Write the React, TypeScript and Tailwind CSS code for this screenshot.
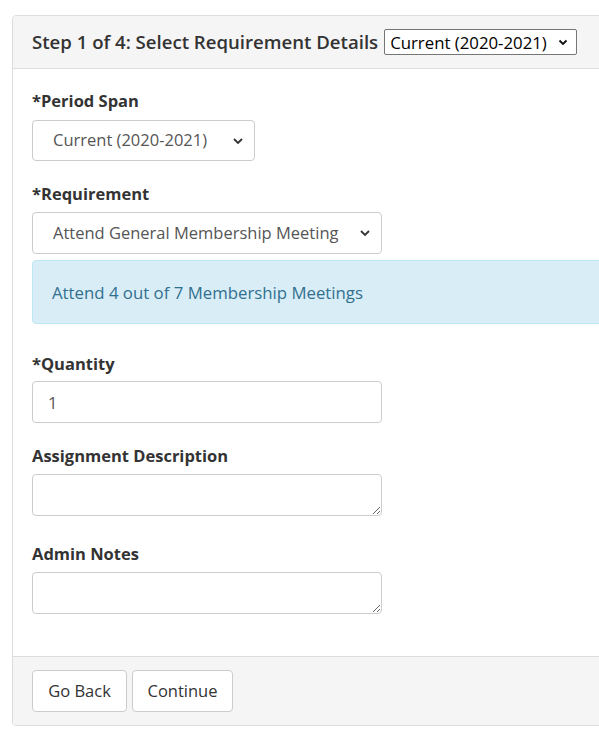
import React from "react";

const Chevron = () => (
  <svg width="14" height="14" viewBox="0 0 14 14" className="pointer-events-none absolute right-[10px] top-1/2 -translate-y-1/2">
    <path d="M3 5 L7 9 L11 5" fill="none" stroke="#333" strokeWidth="1.8" />
  </svg>
);

export default function App() {
  const font = { fontFamily: '"Open Sans", "Noto Sans", sans-serif' };
  return (
    <div className="min-h-[744px] w-[599px] bg-white overflow-hidden" style={font}>
      <div className="ml-[12px] mt-[15px] w-[620px] rounded-[4px] border border-[#dddddd] text-[#333333]">
        <div className="flex h-[53px] items-center gap-[6px] border-b border-[#dddddd] bg-[#f5f5f5] px-[19px] rounded-t-[4px]">
          <span className="text-[18.6px] font-semibold text-[#333]">Step 1 of 4: Select Requirement Details</span>
          <div className="relative">
            <select className="h-[26px] w-[193px] appearance-none border border-[#767676] bg-white pl-[5px] text-[16.8px] text-black rounded-[2px]" defaultValue="c">
              <option value="c">Current (2020-2021)</option>
            </select>
            <svg width="12" height="12" viewBox="0 0 12 12" className="pointer-events-none absolute right-[8px] top-1/2 -translate-y-1/2">
              <path d="M2.5 4.5 L6 8 L9.5 4.5" fill="none" stroke="#111" strokeWidth="1.8" />
            </svg>
          </div>
        </div>
        <div className="px-[19px] pt-[20px] pb-[42px]">
          <div className="text-[16.5px] font-bold leading-[23px] mb-[8px]">*Period Span</div>
          <div className="relative w-[223px]">
            <select className="h-[41px] w-full appearance-none rounded-[4px] border border-[#cccccc] bg-white pl-[20px] text-[16.5px] text-[#555555]" defaultValue="c">
              <option value="c">Current (2020-2021)</option>
            </select>
            <Chevron />
          </div>
          <div className="mt-[21px] text-[16.5px] font-bold leading-[23px] mb-[7px]">*Requirement</div>
          <div className="relative w-[350px]">
            <select className="h-[42px] w-full appearance-none rounded-[4px] border border-[#cccccc] bg-white pl-[20px] pr-[42px] text-[16.5px] text-[#555555]" defaultValue="a">
              <option value="a">Attend General Membership Meetings</option>
            </select>
            <Chevron />
          </div>
          <div className="mt-[6px] -mr-[40px] flex h-[64px] items-center rounded-[4px] border border-[#bce8f1] bg-[#d9edf7] pl-[19px] pt-[2px] text-[16.8px] text-[#31708f]">
            Attend 4 out of 7 Membership Meetings
          </div>
          <div className="mt-[28px] text-[16.5px] font-bold leading-[23px] mb-[6px]">*Quantity</div>
          <input
            className="block h-[42px] w-[350px] rounded-[4px] border border-[#cccccc] bg-white px-[15px] text-[16.5px] text-[#555555] outline-none"
            defaultValue="1"
          />
          <div className="mt-[21px] text-[16.5px] font-bold leading-[23px] mb-[7px]">Assignment Description</div>
          <textarea className="block h-[42px] w-[350px] rounded-[4px] border border-[#cccccc] bg-white px-[15px] text-[16px] outline-none" />
          <div className="mt-[26px] text-[16.5px] font-bold leading-[23px] mb-[7px]">Admin Notes</div>
          <textarea className="block h-[42px] w-[350px] rounded-[4px] border border-[#cccccc] bg-white px-[15px] text-[16px] outline-none" />
        </div>
        <div className="flex gap-[5px] border-t border-[#dddddd] bg-[#f5f5f5] px-[19px] pt-[13px] pb-[13px] rounded-b-[4px]">
          <button className="h-[42px] w-[95px] rounded-[4px] border border-[#cccccc] bg-white text-[16.5px] text-[#333]">Go Back</button>
          <button className="h-[42px] w-[101px] rounded-[4px] border border-[#cccccc] bg-white text-[16.5px] text-[#333]">Continue</button>
        </div>
      </div>
    </div>
  );
}
